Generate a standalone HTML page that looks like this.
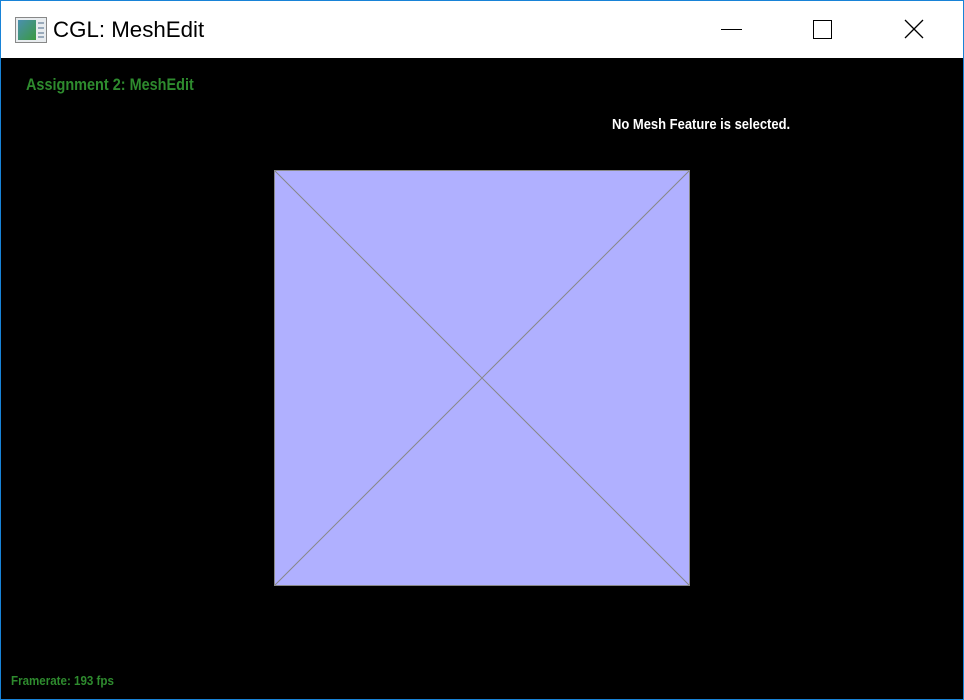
<!DOCTYPE html>
<html><head><meta charset="utf-8"><style>
html,body{margin:0;padding:0;width:964px;height:700px;overflow:hidden;background:#1883d7;font-family:"Liberation Sans","DejaVu Sans",sans-serif}
#win{position:absolute;left:1px;top:1px;width:962px;height:698px;background:#000}
#tb{position:absolute;left:0;top:0;width:962px;height:57px;background:#fff}
.t{position:absolute;white-space:nowrap;font-weight:bold;transform-origin:left top}
</style></head><body>
<div id="win">
<div id="tb">
<svg style="position:absolute;left:14px;top:16px" width="32" height="26" viewBox="0 0 32 26">
<rect x="0.5" y="0.5" width="31" height="25" fill="#e8ecef" stroke="#888"/>
<defs><linearGradient id="g" x1="0" y1="0" x2="1" y2="1"><stop offset="0" stop-color="#4a8fb0"/><stop offset="1" stop-color="#3a9a40"/></linearGradient></defs>
<rect x="3" y="3" width="18" height="20" fill="url(#g)"/>
<rect x="23" y="5" width="6" height="2" fill="#9ab"/><rect x="23" y="10" width="6" height="2" fill="#9ab"/><rect x="23" y="15" width="6" height="2" fill="#9ab"/><rect x="23" y="19" width="6" height="2" fill="#9ab"/>
</svg>
<div style="position:absolute;left:52px;top:16px;font-size:22.3px;color:#000">CGL: MeshEdit</div>
<div style="position:absolute;left:720px;top:28px;width:21px;height:1px;background:#000"></div>
<div style="position:absolute;left:812px;top:19px;width:17px;height:17px;border:1px solid #000"></div>
<svg style="position:absolute;left:903px;top:18px" width="20" height="20"><path d="M1 1L19 19M19 1L1 19" stroke="#000" stroke-width="1.3"/></svg>
</div>
<div class="t" style="left:25px;top:74px;font-size:17px;color:#2e8b2e;transform:scaleX(0.85)">Assignment 2: MeshEdit</div>
<div class="t" style="left:611px;top:115px;font-size:15px;color:#fff;transform:scaleX(0.865)">No Mesh Feature is selected.</div>
<div class="t" style="left:10px;top:672px;font-size:13px;color:#2e8b2e;transform:scaleX(0.89)">Framerate: 193 fps</div>
<svg style="position:absolute;left:273px;top:169px" width="417" height="417">
<rect x="0.5" y="0.5" width="415" height="415" fill="#b0b0ff" stroke="#888"/>
<path d="M0.5 0.5L415.5 415.5M415.5 0.5L0.5 415.5" stroke="#888" stroke-width="1"/>
</svg>
</div>
</body></html>
